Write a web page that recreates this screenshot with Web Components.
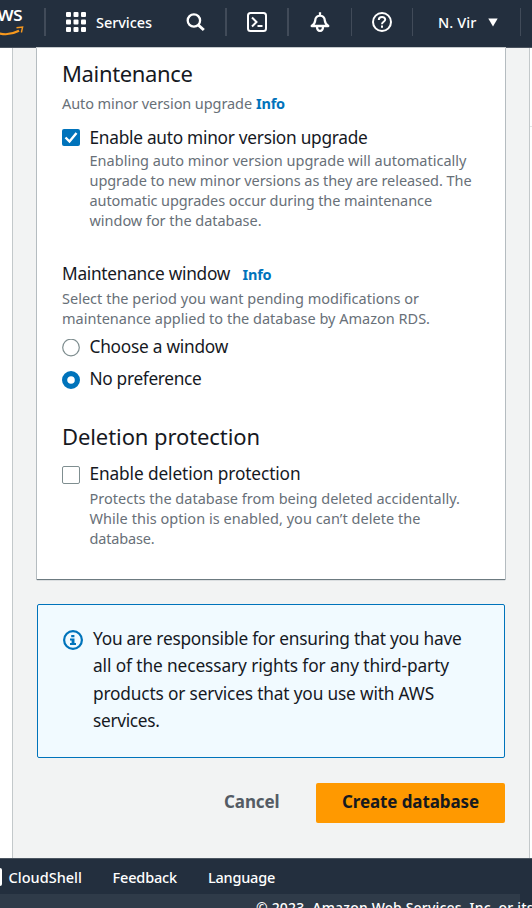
<!DOCTYPE html>
<html lang="en">
<head>
<meta charset="utf-8">
<title>Create database</title>
<style>
html,body{margin:0;height:100%;overflow:hidden;background:#fff}
body{font-family:"Noto Sans","Open Sans",sans-serif;color:#16191f}
</style>
</head>
<body>
<rds-app></rds-app>
<script>
function define(name, html, after) {
  customElements.define(name, class extends HTMLElement {
    connectedCallback() {
      if (this.shadowRoot) return;
      const t = document.createElement('template');
      t.innerHTML = html;
      this.attachShadow({ mode: 'open' }).appendChild(t.content.cloneNode(true));
      if (after) after.call(this, this.shadowRoot);
    }
  });
}

/* One line of text, tracked so that it spans the width given in "w". */
define('text-line', `<style>
:host{display:block;white-space:nowrap;flex:none}
span{display:inline-block}
</style><span><slot></slot></span>`, function (root) {
  const w = +this.getAttribute('w'), n = this.textContent.length;
  const s = root.querySelector('span');
  this.style.width = w + 'px';
  s.style.letterSpacing = ((w - s.getBoundingClientRect().width) / n) + 'px';
});

define('nav-divider', `<style>
:host{display:block;flex:none;width:var(--w,1px);height:28px;background:#414b59}
</style>`);

define('top-nav', `<style>
:host{display:flex;align-items:flex-start;box-sizing:border-box;height:48px;background:#232f3e;border-bottom:1px solid #4a535f;color:#fff;overflow:hidden;flex:none}
svg{display:block;flex:none;fill:none;stroke:#fff;stroke-width:2}
nav-divider{margin-top:8px}
text-line{font-size:14.5px;line-height:20px;margin-top:12px;font-weight:500}
.logo{width:24px;height:47px;display:flex;flex-direction:column;align-items:flex-end;flex:none}
.logo b{font-weight:500;font-size:20px;line-height:24px;height:24px;margin:2px 2px 0 0;letter-spacing:-.7px}
</style>
<div class="logo"><b>ws</b><svg width="24" height="10" viewBox="0 25 24 10" style="stroke:#f7981d"><path d="M-4 31.500C4 34.300 12 33.500 19 29.800" stroke-width="2.200"/><path d="M16.500 26.800L22.600 26 21.400 31.500" stroke-width="1.400"/></svg></div>
<nav-divider style="--w:2px;margin-left:20px"></nav-divider>
<svg width="20" height="20" style="margin:12px 0 0 20px;fill:#fff;stroke:none"><g id="g"><rect width="5" height="5" rx="1"/><rect x="7.5" width="5" height="5" rx="1"/><rect x="15" width="5" height="5" rx="1"/></g><use href="#g" y="7.5"/><use href="#g" y="15"/></svg>
<text-line w="56" style="margin-left:10px">Services</text-line>
<svg width="20" height="20" style="margin:12px 0 0 34px"><circle cx="7.9" cy="8.500" r="6.200" stroke-width="2.3"/><path d="M12.300 13l5.500 5" stroke-width="3"/></svg>
<nav-divider style="--w:2px;margin-left:19px"></nav-divider>
<svg width="20" height="20" style="margin:12px 0 0 20px"><rect x="1" y="1" width="18" height="18" rx="2.5"/><path d="M5 5.5L9.5 10 5 14.5M10.5 14h5"/></svg>
<nav-divider style="--w:2px;margin-left:20px"></nav-divider>
<svg width="20" height="20" style="margin:12px 0 0 21px;stroke-width:2.300"><path d="M10 .2v3M1.700 14h16.600C15.500 12 15 11 14.800 8.500 14.500 2 5.500 2 5.200 8.500 5 11 4.500 12 1.700 14zM7 14.500c0 5.800 6 5.800 6 0" stroke-linejoin="round"/></svg>
<nav-divider style="margin-left:21px"></nav-divider>
<svg width="20" height="20" style="margin:12px 0 0 20px"><circle cx="10" cy="10" r="9"/><path d="M6.800 8c0-4 6.400-3.800 6.400-.4 0 2.200-3.200 2.200-3.200 4.600M10 13.500v2.200"/></svg>
<nav-divider style="margin-left:20px"></nav-divider>
<text-line w="38.500" style="margin-left:25px">N. Vir</text-line>
<svg width="10" height="9" style="margin:18px 0 0 11.500px;fill:#fff;stroke:none"><path d="M.3.5h9.400L5 8.500z"/></svg>
<nav-divider style="margin-left:22px"></nav-divider>`);

/* Checkbox or radio with a label and description lines below it. */
define('form-choice', `<style>
:host{display:grid;grid-template-columns:18px 1fr;column-gap:9.500px;align-items:start}
svg{display:block;margin-top:var(--drop,5px)}
::slotted(.label){font-size:17.3px;line-height:24px;margin-top:1px}
.body{display:flex;flex-direction:column}
.d{margin-top:var(--gap,2px);font-size:14.500px;line-height:20px;color:#687078}
</style>
<svg width="18" height="18"></svg>
<div class="body"><slot name="label"></slot><div class="d"><slot></slot></div></div>`, function (root) {
  root.querySelector('svg').innerHTML = {
    checked: '<rect width="18" height="17" rx="2" fill="#0073bb"/><path d="M3.500 8.500l4 4 7-8.500" fill="none" stroke="#fff" stroke-width="2.400"/>',
    unchecked: '<rect x=".5" y=".5" width="17" height="17" rx="1.500" fill="#fff" stroke="#7f8e90"/>',
    radio: '<circle cx="9" cy="8.500" r="8.300" fill="#fff" stroke="#7f8e90" stroke-width="1.200"/>',
    selected: '<circle cx="9" cy="9" r="6.400" fill="#fff" stroke="#0073bb" stroke-width="5.200"/>'
  }[this.getAttribute('kind')];
  if (!this.querySelector('text-line:not([slot])')) root.querySelector('.d').remove();
});

define('settings-card', `<style>
:host{display:flex;flex-direction:column;box-sizing:border-box;height:531px;padding:11px 25px 0;background:#fff;box-shadow:0 1px 1px #6c7a80,0 0 0 1px #c5cacd}
.h{font-size:22px;line-height:28px}
.s{font-size:14.500px;line-height:20px;color:#687078}
.l{font-size:17.300px;line-height:24px}
.row{display:flex;align-items:baseline}
.i{color:#0073bb;font-weight:700;font-size:14.500px}
</style>
<text-line class="h" w="130.500">Maintenance</text-line>
<div class="row s" style="margin-top:6px"><text-line w="190">Auto minor version upgrade</text-line><text-line class="i" w="29" style="margin-left:4px">Info</text-line></div>
<form-choice kind="checked" style="margin-top:12px;--drop:4px;--gap:0px">
<text-line slot="label" class="label" w="278">Enable auto minor version upgrade</text-line>
<text-line w="377">Enabling auto minor version upgrade will automatically</text-line>
<text-line w="382">upgrade to new minor versions as they are released. The</text-line>
<text-line w="342.500">automatic upgrades occur during the maintenance</text-line>
<text-line w="172">window for the database.</text-line></form-choice>
<div class="row l" style="margin-top:32px"><text-line w="168">Maintenance window</text-line><text-line class="i" w="29" style="margin-left:12.500px">Info</text-line></div>
<div class="s" style="margin-top:2px"><text-line w="357">Select the period you want pending modifications or</text-line><text-line w="368">maintenance applied to the database by Amazon RDS.</text-line></div>
<form-choice kind="radio" style="margin-top:6px"><text-line slot="label" class="label" w="138.500">Choose a window</text-line></form-choice>
<form-choice kind="selected" style="margin-top:7px"><text-line slot="label" class="label" w="112">No preference</text-line></form-choice>
<text-line class="h" w="198" style="margin-top:31px">Deletion protection</text-line>
<form-choice kind="unchecked" style="margin-top:11px">
<text-line slot="label" class="label" w="211">Enable deletion protection</text-line>
<text-line w="370.500">Protects the database from being deleted accidentally.</text-line>
<text-line w="331">While this option is enabled, you can’t delete the</text-line>
<text-line w="65">database.</text-line></form-choice>`);

define('info-alert', `<style>
:host{display:flex;align-items:flex-start;box-sizing:border-box;height:154px;border:1px solid #0073bb;border-radius:2px;background:#f1faff;padding:20px 25px 0;font-size:17.300px;line-height:27.400px}
svg{flex:none;margin:5px 10px 0 0}
</style>
<svg width="20" height="20"><circle cx="10" cy="10" r="8.900" fill="none" stroke="#0073bb" stroke-width="2.200"/><path d="M8.200 5h3.200v2.300H8.200zM7 8.500h4.500v4.600H13V15H7v-1.900h1.600v-2.700H7z" fill="#0073bb"/></svg>
<div><text-line w="368.500">You are responsible for ensuring that you have</text-line>
<text-line w="356">all of the necessary rights for any third-party</text-line>
<text-line w="341">products or services that you use with AWS</text-line>
<text-line w="66.500">services.</text-line></div>`);

define('form-actions', `<style>
:host{display:flex;justify-content:flex-end;align-items:flex-start;height:40px;font-weight:700;font-size:17px;line-height:24px}
.c{color:#545b64;margin:7px 36.500px 0 0}
button{all:unset;box-sizing:border-box;display:flex;align-items:flex-start;height:40px;width:189px;background:#ff9900;border-radius:2px;padding:7px 0 0 26px;color:#16191f}
</style><text-line class="c" w="55.500">Cancel</text-line><button><text-line w="137">Create database</text-line></button>`);

define('console-footer', `<style>
:host{display:block;height:50px;box-sizing:border-box;border-top:1px solid #4c5661;background:#232f3e;color:#fff;flex:none;overflow:hidden;font-size:14.500px;font-weight:500;line-height:20px}
.a{display:flex;height:35px;padding-top:8px;box-sizing:border-box}
.i{width:2px;height:18px;background:#fff;border-radius:0 3px 3px 0;margin:1px 6.500px 0 0}
.b{width:520px;height:15px;background:#2f3b49;box-sizing:border-box;padding:4px 0 0 256px;font-size:14px}
</style>
<div class="a"><div class="i"></div><text-line w="73.500">CloudShell</text-line><text-line w="64.500" style="margin-left:30.500px">Feedback</text-line><text-line w="67" style="margin-left:31px">Language</text-line></div>
<div class="b"><text-line w="345">© 2023, Amazon Web Services, Inc. or its affiliates.</text-line></div>`);

define('rds-app', `<style>
:host{display:flex;flex-direction:column;width:532px;height:908px;background:#fff}
main{flex:1;min-height:0;box-sizing:border-box;display:flex}
.page{box-sizing:border-box;width:518px;margin-left:12px;border:solid #c3c8ca;border-width:0 1px;background:#f2f3f3;padding:0 24px}
.side{margin-top:78px;width:2px;height:1px;background:#e1e4e5}
info-alert{margin-top:25px}
form-actions{margin-top:25px}
</style>
<top-nav></top-nav>
<main><div class="page"><settings-card></settings-card><info-alert></info-alert><form-actions></form-actions></div><div class="side"></div></main>
<console-footer></console-footer>`);
</script>
</body>
</html>
